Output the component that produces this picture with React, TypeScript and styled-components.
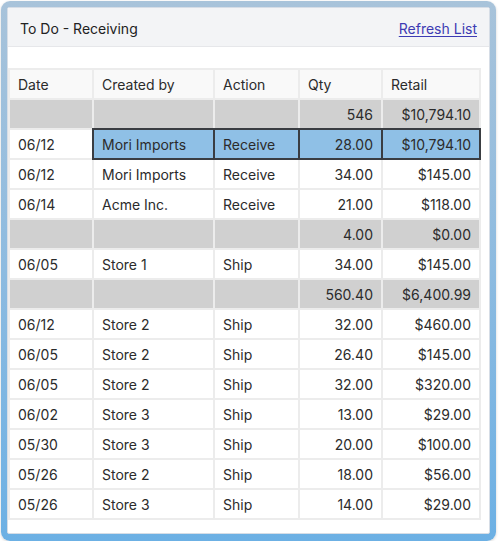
import React from "react";
import styled, { createGlobalStyle } from "styled-components";

const Global = createGlobalStyle`
  html, body { margin: 0; padding: 0; background: #ffffff; }
  body { font-family: Inter, "Noto Sans", sans-serif; color: #2b2b2b; }
  * { box-sizing: border-box; }
`;

const Frame = styled.div`
  margin: 1px 0 0 1px;
  width: 495px;
  height: 540px;
  padding: 6px 6px 7px 6px;
  border-radius: 9px;
  background: linear-gradient(180deg, #a8c3da 0%, #8dbbe0 50%, #6cb0e4 100%);
  box-shadow: 0 1px 3px rgba(0, 0, 0, 0.18);
  display: flex;
`;

const Panel = styled.div`
  flex: 1;
  background: #ffffff;
  border: 1px solid #d6dde6;
  border-radius: 2px;
  display: flex;
  flex-direction: column;
  overflow: hidden;
`;

const Header = styled.div`
  height: 39px;
  flex: none;
  display: flex;
  align-items: center;
  justify-content: space-between;
  padding: 2px 12px 0 12px;
  background: #f3f4f6;
  border-bottom: 1px solid #e6e7ea;
`;

const Title = styled.div`
  font-size: 14px;
  color: #222;
`;

const RefreshLink = styled.a`
  font-size: 14px;
  color: #3d3bb3;
  text-decoration: underline;
  text-underline-offset: 2px;
  cursor: pointer;
`;

const Body = styled.div`
  padding: 21px 11px 0 0;
`;

const Table = styled.table`
  border-collapse: collapse;
  width: 471px;
  font-size: 14px;
  table-layout: fixed;
`;

const HeadCell = styled.th<{ $w: number }>`
  width: ${(p) => p.$w}px;
  height: 30px;
  padding: 0 8px;
  text-align: left;
  font-weight: 400;
  background: #f9f9f9;
  border: 2px solid #ececec;
  color: #2b2b2b;
`;

const Cell = styled.td<{ $right?: boolean; $kind: "plain" | "group" | "sel" }>`
  height: 30px;
  padding: 0 8px;
  text-align: ${(p) => (p.$right ? "right" : "left")};
  white-space: nowrap;
  color: #2b2b2b;
  background: ${(p) =>
    p.$kind === "group" ? "#d0d0d0" : p.$kind === "sel" ? "#8fc0e6" : "#ffffff"};
  border: ${(p) => (p.$kind === "sel" ? "2px double #3a3d42" : "2px solid #ececec")};
`;

type Row = { group?: boolean; sel?: boolean; c: [string, string, string, string, string] };

const rows: Row[] = [
  { group: true, c: ["", "", "", "546", "$10,794.10"] },
  { sel: true, c: ["06/12", "Mori Imports", "Receive", "28.00", "$10,794.10"] },
  { c: ["06/12", "Mori Imports", "Receive", "34.00", "$145.00"] },
  { c: ["06/14", "Acme Inc.", "Receive", "21.00", "$118.00"] },
  { group: true, c: ["", "", "", "4.00", "$0.00"] },
  { c: ["06/05", "Store 1", "Ship", "34.00", "$145.00"] },
  { group: true, c: ["", "", "", "560.40", "$6,400.99"] },
  { c: ["06/12", "Store 2", "Ship", "32.00", "$460.00"] },
  { c: ["06/05", "Store 2", "Ship", "26.40", "$145.00"] },
  { c: ["06/05", "Store 2", "Ship", "32.00", "$320.00"] },
  { c: ["06/02", "Store 3", "Ship", "13.00", "$29.00"] },
  { c: ["05/30", "Store 3", "Ship", "20.00", "$100.00"] },
  { c: ["05/26", "Store 2", "Ship", "18.00", "$56.00"] },
  { c: ["05/26", "Store 3", "Ship", "14.00", "$29.00"] },
];

const cols = [
  { name: "Date", w: 84 },
  { name: "Created by", w: 121 },
  { name: "Action", w: 85 },
  { name: "Qty", w: 83 },
  { name: "Retail", w: 98 },
];

export default function App() {
  return (
    <>
      <Global />
      <Frame>
        <Panel>
          <Header>
            <Title>To Do - Receiving</Title>
            <RefreshLink>Refresh List</RefreshLink>
          </Header>
          <Body>
            <Table>
              <thead>
                <tr>
                  {cols.map((c) => (
                    <HeadCell key={c.name} $w={c.w}>
                      {c.name}
                    </HeadCell>
                  ))}
                </tr>
              </thead>
              <tbody>
                {rows.map((r, i) => (
                  <tr key={i}>
                    {r.c.map((v, j) => (
                      <Cell
                        key={j}
                        $right={j >= 3}
                        $kind={r.group ? "group" : r.sel && j > 0 ? "sel" : "plain"}
                      >
                        {v}
                      </Cell>
                    ))}
                  </tr>
                ))}
              </tbody>
            </Table>
          </Body>
        </Panel>
      </Frame>
    </>
  );
}
